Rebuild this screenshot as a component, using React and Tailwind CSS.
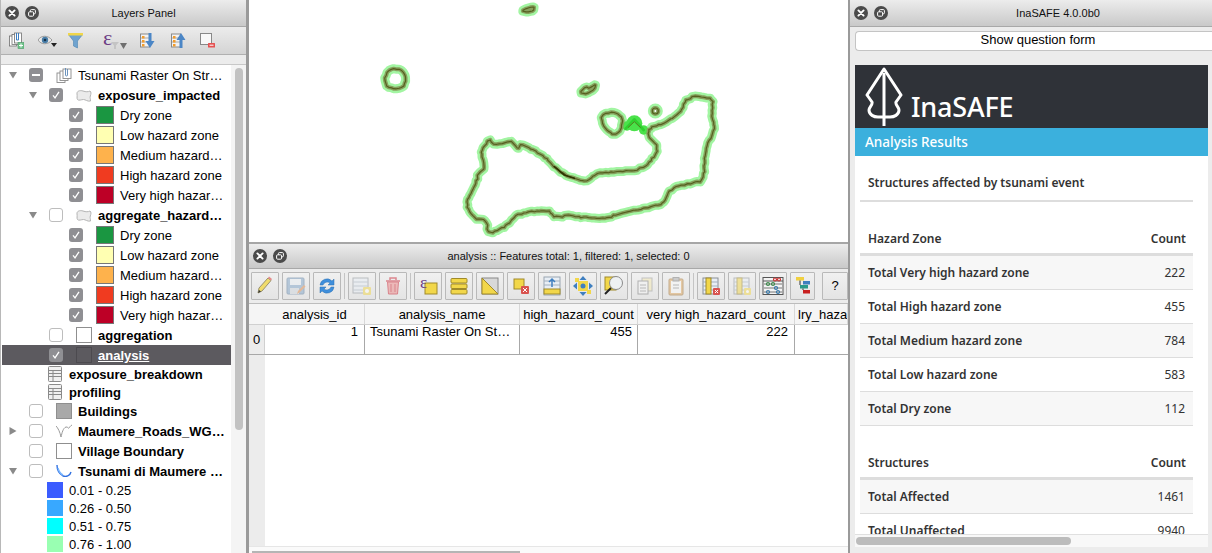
import React from "react";

const SANS = "font-['Liberation_Sans',Arial,sans-serif]";
const WEB = "font-['Noto_Sans','Open_Sans',sans-serif]";

function WinButtons() {
  return (
    <div className="flex items-center gap-[6px] pl-[4px] w-[40px] shrink-0">
      <svg width="14" height="14" viewBox="0 0 14 14">
        <circle cx="7" cy="7" r="7" fill="#4b4b4b" />
        <path d="M4.4 4.4l5.2 5.2M9.6 4.4l-5.2 5.2" stroke="#fff" strokeWidth="1.9" strokeLinecap="round" />
      </svg>
      <svg width="14" height="14" viewBox="0 0 14 14">
        <circle cx="7" cy="7" r="7" fill="#4b4b4b" />
        <rect x="5.4" y="3.6" width="5" height="4.2" rx="1" fill="none" stroke="#fff" strokeWidth="1" />
        <rect x="3.6" y="5.8" width="5" height="4.4" rx="1" fill="#4b4b4b" stroke="#fff" strokeWidth="1" />
      </svg>
    </div>
  );
}

function TitleBar({ title, h, extra = "" }) {
  return (
    <div className={`${h} flex items-center shrink-0 bg-gradient-to-b from-[#ececec] to-[#c9c9c9] border-b border-[#a8a8a8]`}>
      <WinButtons />
      <div className={`flex-1 text-center text-[11px] text-[#111] ${extra}`}>{title}</div>
    </div>
  );
}

function Check({ state }) {
  if (state === "on")
    return (
      <div className="w-[14px] h-[14px] rounded-[3px] bg-[#8f8f93] flex items-center justify-center shrink-0">
        <svg width="10" height="10" viewBox="0 0 10 10"><path d="M2 5.4l2 2.4 4-6" stroke="#fff" strokeWidth="1.3" fill="none" /></svg>
      </div>
    );
  if (state === "mixed")
    return (
      <div className="w-[14px] h-[14px] rounded-[3px] bg-[#8f8f93] flex items-center justify-center shrink-0">
        <div className="w-[8px] h-[2px] bg-white" />
      </div>
    );
  return <div className="w-[14px] h-[14px] rounded-[3px] bg-white border border-[#bdbdbd] shrink-0" />;
}

function Arrow({ dir }) {
  if (dir === "down")
    return <svg width="10" height="8" viewBox="0 0 10 8"><path d="M1 1h8L5 7.5z" fill="#8a8a8a" /></svg>;
  if (dir === "right")
    return <svg width="10" height="10" viewBox="0 0 10 10"><path d="M1.5 1v8L8.5 5z" fill="#8a8a8a" /></svg>;
  return null;
}

const GroupIcon = ({ size = 16 }) => (
  <svg width={size} height={size} viewBox="0 0 16 16" fill="none" stroke="#8a8a8a" strokeWidth="0.9">
    <rect x="1" y="6" width="8" height="9.500" fill="#fff" />
    <rect x="4" y="4" width="8" height="9.500" fill="#fff" />
    <rect x="7" y="2" width="8" height="9.500" fill="#fff" />
    <path d="M9.500 1v7a1 1 0 002 0V2" stroke="#5b87b5" />
  </svg>
);
const PolyIcon = () => (
  <svg width="16" height="13" viewBox="0 0 16 13">
    <path d="M1 5c-.5-3 3-4 6-3s5 1 7 0c1.500 1 1 3 .3 5s.5 3 .2 5c-3 .8-5-1.500-7-1.500S2.500 12 1.500 10.500 1.500 7 1 5z" fill="#ebebeb" stroke="#b4b4b4" />
  </svg>
);
const BoxIcon = ({ fill = "#fff", stroke = "#8f8f8f" }) => (
  <div className="w-[16px] h-[16px] border shrink-0" style={{ background: fill, borderColor: stroke }} />
);
const TableIcon = () => (
  <svg width="14" height="16" viewBox="0 0 14 16" fill="#f0f0f0" stroke="#8a8a8a" strokeWidth="1">
    <rect x="0.500" y="0.500" width="13" height="15" rx="1" />
    <path d="M0.500 4.500h13M0.500 7.500h13M0.500 10.500h13M5 4.500v11" fill="none" />
  </svg>
);
const LineIcon = () => (
  <svg width="16" height="16" viewBox="0 0 16 16"><path d="M0 3c2 2 4 6 5 11 1-4 2-9 5-10 2-.5 2 2 3 1s1-2 3-3" fill="none" stroke="#9a9a9a" /></svg>
);
const RasterIcon = () => (
  <svg width="16" height="14" viewBox="0 0 16 14"><path d="M1 1c0 5 1 8 6 11 3 1 7 0 8-4" fill="none" stroke="#2f6fe0" strokeWidth="1.400" /><path d="M2 4c1 4 3 6 5 7" fill="none" stroke="#79b6ff" strokeWidth="1.400" /></svg>
);

function Name({ children, bold, selected }) {
  return (
    <span className={`text-[13px] whitespace-nowrap ${bold ? "font-bold" : ""} ${selected ? "text-white underline" : "text-black"}`}>
      {children}
    </span>
  );
}

function Row({ pad, arrow, check, icon, text, bold, selected }) {
  return (
    <div className={`h-[20px] flex items-center ${pad} ${selected ? "bg-[#5c5a5f]" : ""}`}>
      <div className="w-[21px] shrink-0 flex items-center">{arrow ? <Arrow dir={arrow} /> : null}</div>
      <Check state={check} />
      <div className="ml-[13px] w-[16px] shrink-0 flex items-center justify-center">{icon}</div>
      <div className="ml-[6px]"><Name bold={bold} selected={selected}>{text}</Name></div>
    </div>
  );
}

function Legend({ color, text }) {
  return (
    <div className="h-[20px] flex items-center pl-[67px]">
      <Check state="on" />
      <div className="ml-[13px] w-[18px] h-[18px] border border-[#777] shrink-0" style={{ background: color }} />
      <div className="ml-[6px]"><Name>{text}</Name></div>
    </div>
  );
}

function ZoneGroup() {
  return (
    <>
      <Legend color="#1a9641" text="Dry zone" />
      <Legend color="#ffffb2" text="Low hazard zone" />
      <Legend color="#feb24c" text="Medium hazard…" />
      <Legend color="#f03b20" text="High hazard zone" />
      <Legend color="#bd0026" text="Very high hazar…" />
    </>
  );
}

function TableRow({ text }) {
  return (
    <div className="h-[18px] flex items-center pl-[46px]">
      <TableIcon />
      <div className="ml-[7px]"><Name bold>{text}</Name></div>
    </div>
  );
}

function Ramp({ color, text }) {
  return (
    <div className="h-[18px] flex items-center pl-[45px]">
      <div className="w-[16px] h-[16px] shrink-0" style={{ background: color }} />
      <div className="ml-[6px]"><Name>{text}</Name></div>
    </div>
  );
}

const SmallTable = ({ arrow }) => (
  <svg width="15" height="15" viewBox="0 0 15 15">
    <rect x="0.500" y="1" width="9" height="13" fill="#f2f2f2" stroke="#8a8a8a" />
    <path d="M1 5h8M1 9h8" stroke="#aaa" />
    <rect x="2" y="3" width="2.500" height="2.500" fill="#f39c2b" />
    <rect x="2" y="7" width="2.500" height="2.500" fill="#f39c2b" />
    <rect x="2" y="11" width="2.500" height="2.500" fill="#f39c2b" />
    {arrow === "down" ? (
      <path d="M8.500 0h3v8h3l-4.500 7-4.500-7h3z" fill="#4b86c6" />
    ) : (
      <path d="M8.500 15h3V7h3L10 0 5.500 7h3z" fill="#4b86c6" />
    )}
  </svg>
);

function LayerToolbar() {
  return (
    <div className="h-[28px] shrink-0 flex items-center bg-gradient-to-b from-[#ececec] to-[#d4d4d4] border-b border-[#b0b0b0] pl-[8px]">
      <svg width="15" height="17" viewBox="0 0 15 17" className="shrink-0">
        <g fill="#fff" stroke="#6f6f6f" strokeWidth="0.800">
          <rect x="0.500" y="4" width="7" height="10" />
          <rect x="3" y="2.500" width="7" height="10" />
          <rect x="5.500" y="1" width="7" height="10" />
        </g>
        <path d="M7.500 1v7h2V1" fill="none" stroke="#3b7cc0" />
        <rect x="9" y="10.500" width="6" height="6" fill="#6fc48a" stroke="#4b9a66" strokeWidth="0.600" />
        <path d="M12 11.500v4M10 13.500h4" stroke="#fff" />
      </svg>
      <svg width="20" height="12" viewBox="0 0 20 12" className="ml-[14px] shrink-0">
        <path d="M0 5c3-5 10-5 14 0-4 5-11 5-14 0z" fill="#e8e8e8" stroke="#888" strokeWidth="0.800" />
        <circle cx="7" cy="5" r="3.200" fill="#4a7ea8" />
        <circle cx="7" cy="5" r="1.300" fill="#16324a" />
        <path d="M13 8h6l-3 4z" fill="#222" />
      </svg>
      <svg width="15" height="16" viewBox="0 0 15 16" className="ml-[10px] shrink-0">
        <path d="M0 1h15l-5.500 7v7l-4-2V8z" fill="#6fa3cf" stroke="#4d84b2" strokeWidth="0.600" />
        <rect x="0" y="0" width="15" height="2.500" fill="#f0d64a" />
      </svg>
      <div className="ml-[20px] w-[24px] flex items-center shrink-0">
        <span className="text-[22px] leading-none text-[#6b3c84] font-['Liberation_Serif',serif] -mt-[6px]">ε</span>
        <svg width="8" height="7" viewBox="0 0 8 7" className="mt-[10px] -ml-[1px] shrink-0"><path d="M0 0h8L5 3.500V7H3V3.500z" fill="#c4c4c4" /></svg>
        <svg width="7" height="6" viewBox="0 0 7 6" className="ml-[1px] mt-[10px] shrink-0"><path d="M0 0h7L3.500 6z" fill="#6f6f6f" /></svg>
      </div>
      <div className="ml-[13px] shrink-0"><SmallTable arrow="down" /></div>
      <div className="ml-[16px] shrink-0"><SmallTable arrow="up" /></div>
      <svg width="15" height="15" viewBox="0 0 15 15" className="ml-[14px] shrink-0">
        <rect x="0.500" y="0.500" width="11" height="11" fill="#f8f8f8" stroke="#888" />
        <rect x="8" y="10" width="7" height="4.500" rx="0.500" fill="#e55050" />
        <path d="M9.500 12.200h4" stroke="#fff" />
      </svg>
    </div>
  );
}

function TBtn({ children, w = "w-[28px]", off }) {
  return (
    <div className={`${w} h-[28px] shrink-0 border border-[#b9b9b9] rounded-[1px] bg-gradient-to-b from-[#f0f0f0] to-[#e4e4e4] flex items-center justify-center ${off ? "[&>*]:opacity-50" : ""}`}>
      {children}
    </div>
  );
}
const Sep = () => <div className="w-px h-[26px] bg-[#c4c4c4] shrink-0" />;

const Tbl = ({ children }) => (
  <svg width="20" height="20" viewBox="0 0 20 20">
    <rect x="1" y="2" width="15" height="15" fill="#e8eef5" stroke="#8a8f96" />
    <path d="M1 6h15M1 10h15M1 14h15" stroke="#a4b0bd" />
    {children}
  </svg>
);

function AttrToolbar() {
  return (
    <div className="h-[35px] shrink-0 flex items-center gap-[3px] pl-[2px] bg-[#ececec] border-b border-[#bdbdbd]">
      <TBtn>
        <svg width="20" height="20" viewBox="0 0 20 20"><path d="M3 17l1-5L13 2l3 2.500-9 10.500z" fill="#f0dc6c" stroke="#9a9270" /><path d="M13 2l3 2.500 1-1.500-3-2.500z" fill="#e58a8a" /><path d="M3 17l1-3 2 1.500z" fill="#333" /></svg>
      </TBtn>
      <TBtn off>
        <svg width="20" height="20" viewBox="0 0 20 20"><rect x="1" y="2" width="17" height="16" rx="1" fill="#7fa4c8" stroke="#5f7f9f" /><rect x="4" y="3" width="11" height="6" fill="#e9eef3" /><rect x="4" y="12" width="9" height="6" fill="#cfd6dd" /><path d="M11 18l1-3 6-6 1.500 1.500-6 6z" fill="#e08a4a" /></svg>
      </TBtn>
      <TBtn>
        <svg width="20" height="20" viewBox="0 0 20 20" fill="none"><path d="M3 9a7 7 0 0 1 12-4l2-2v6h-6l2-2a4.500 4.500 0 0 0-7 2z" fill="#3f8fdc" stroke="#2f70b0" strokeWidth="0.500" /><path d="M17 11a7 7 0 0 1-12 4l-2 2v-6h6l-2 2a4.500 4.500 0 0 0 7-2z" fill="#3f8fdc" stroke="#2f70b0" strokeWidth="0.500" /></svg>
      </TBtn>
      <Sep />
      <TBtn off><Tbl><rect x="11" y="11" width="8" height="8" rx="1" fill="#f0d64a" /><circle cx="15" cy="15" r="2" fill="#fff" /></Tbl></TBtn>
      <TBtn off>
        <svg width="20" height="20" viewBox="0 0 20 20"><path d="M3 5h14M7 4V2h6v2" stroke="#c23" strokeWidth="1.500" fill="none" /><path d="M4.500 6h11l-1 12h-9z" fill="#e88" stroke="#c23" /><path d="M8 8v8M12 8v8" stroke="#c23" /></svg>
      </TBtn>
      <Sep />
      <TBtn>
        <svg width="20" height="20" viewBox="0 0 20 20"><rect x="7" y="7" width="12" height="11" fill="#f2d74a" stroke="#a08a2a" /><text x="2" y="12" fontSize="17" fontFamily="Liberation Serif" fill="#6b3c84">ε</text></svg>
      </TBtn>
      <TBtn>
        <svg width="20" height="20" viewBox="0 0 20 20" fill="#f2d74a" stroke="#a08a2a"><rect x="2" y="2.500" width="16" height="4.500" rx="1" /><rect x="2" y="8" width="16" height="4.500" rx="1" /><rect x="2" y="13.500" width="16" height="4.500" rx="1" /></svg>
      </TBtn>
      <TBtn>
        <svg width="20" height="20" viewBox="0 0 20 20"><rect x="2" y="2" width="16" height="16" fill="#d8d8d8" stroke="#888" /><path d="M2 2l16 16H2z" fill="#f2d74a" stroke="#a08a2a" /></svg>
      </TBtn>
      <TBtn>
        <svg width="20" height="20" viewBox="0 0 20 20"><rect x="3" y="3" width="10" height="10" fill="#f2d74a" stroke="#a08a2a" /><rect x="10" y="10" width="8" height="8" rx="1" fill="#d9534f" /><path d="M12 12l4 4M16 12l-4 4" stroke="#fff" /></svg>
      </TBtn>
      <TBtn>
        <svg width="20" height="20" viewBox="0 0 20 20"><rect x="2" y="1" width="16" height="18" fill="#e8eef5" stroke="#9aa6b2" /><path d="M2 5h16M2 9h16" stroke="#a4b0bd" /><rect x="2" y="13" width="16" height="5" fill="#f2d74a" stroke="#a08a2a" /><path d="M10 11V3M7 6l3-3 3 3" stroke="#3f7fc0" strokeWidth="1.500" fill="none" /></svg>
      </TBtn>
      <TBtn>
        <svg width="22" height="22" viewBox="0 0 22 22"><rect x="6" y="6" width="10" height="10" fill="#f2d74a" /><g fill="#3f7fc0"><path d="M11 1l3.500 4h-7z" /><path d="M11 21l3.500-4h-7z" /><path d="M1 11l4-3.500v7z" /><path d="M21 11l-4-3.500v7z" /></g><circle cx="11" cy="11" r="2.500" fill="#3f7fc0" /><rect x="3" y="3" width="4" height="4" fill="#f2d74a" /><rect x="15" y="15" width="4" height="4" fill="#f2d74a" /></svg>
      </TBtn>
      <TBtn>
        <svg width="22" height="22" viewBox="0 0 22 22"><rect x="2" y="2" width="11" height="13" fill="#f2d74a" stroke="#a08a2a" /><circle cx="13" cy="8" r="6.500" fill="#eef1f3" stroke="#8a8a8a" /><path d="M8 13l-6 6" stroke="#222" strokeWidth="2" /></svg>
      </TBtn>
      <TBtn off>
        <svg width="20" height="20" viewBox="0 0 20 20"><rect x="7" y="2" width="10" height="13" fill="#f4e9b0" stroke="#999" /><rect x="3" y="5" width="10" height="13" fill="#f5f5f5" stroke="#777" /><path d="M5 9h6M5 12h6M5 15h6" stroke="#888" /></svg>
      </TBtn>
      <TBtn off>
        <svg width="20" height="20" viewBox="0 0 20 20"><rect x="3" y="3" width="14" height="16" rx="1" fill="#e0a860" stroke="#a07030" /><rect x="5" y="5" width="10" height="12" fill="#fbfbfb" /><rect x="7" y="1.500" width="6" height="3.500" fill="#aaa" stroke="#777" /><path d="M7 9h6M7 12h6" stroke="#888" /></svg>
      </TBtn>
      <Sep />
      <TBtn>
        <svg width="20" height="20" viewBox="0 0 20 20"><rect x="2" y="2" width="15" height="16" fill="#e8eef5" stroke="#8a8f96" /><path d="M2 6h15M2 10h15M2 14h15" stroke="#a4b0bd" /><rect x="5" y="2" width="5" height="16" fill="#f2d74a" stroke="#a08a2a" /><rect x="12" y="12" width="7" height="7" rx="1" fill="#d9534f" /><path d="M14 14l3 3M17 14l-3 3" stroke="#fff" /></svg>
      </TBtn>
      <TBtn off>
        <svg width="20" height="20" viewBox="0 0 20 20"><rect x="2" y="2" width="15" height="16" fill="#e8eef5" stroke="#8a8f96" /><path d="M2 6h15M2 10h15M2 14h15" stroke="#a4b0bd" /><rect x="5" y="2" width="5" height="16" fill="#f2d74a" stroke="#a08a2a" /><rect x="12" y="12" width="7" height="7" rx="1" fill="#f2d74a" /><circle cx="15.500" cy="15.500" r="1.500" fill="#fff" /></svg>
      </TBtn>
      <TBtn>
        <svg width="22" height="20" viewBox="0 0 22 20"><rect x="1" y="1.500" width="20" height="17" fill="#f4f4f4" stroke="#555" /><path d="M1 5h20" stroke="#555" /><path d="M2 8h18M2 12h18M2 16h18" stroke="#777" /><g fill="none" strokeWidth="1.200"><circle cx="13" cy="3.500" r="1.500" stroke="#c33" /><circle cx="17" cy="3.500" r="1.500" stroke="#c33" /><circle cx="6" cy="8" r="1.500" stroke="#3a8a4a" /><circle cx="11" cy="8" r="1.500" stroke="#3a8a4a" /><circle cx="14" cy="12" r="1.500" stroke="#37a" /><circle cx="6" cy="16" r="1.500" stroke="#37a" /><circle cx="16" cy="16" r="1.500" stroke="#37a" /></g></svg>
      </TBtn>
      <TBtn w="w-[25px]">
        <svg width="18" height="20" viewBox="0 0 18 20"><rect x="2" y="1" width="8" height="3.500" fill="#f0d040" /><rect x="9" y="5" width="7" height="3.500" fill="#3f7fc0" /><rect x="6" y="9" width="8" height="3.500" fill="#2a9a8a" /><rect x="9" y="14" width="7" height="3.500" fill="#c82020" /><path d="M6 4.500V9M9 12.500V14" stroke="#333" /></svg>
      </TBtn>
      <div className="w-px" />
      <TBtn w="w-[26px]"><span className="text-[13px] text-black">?</span></TBtn>
    </div>
  );
}

function Th({ w, children, clip }) {
  return (
    <div className={`${w} shrink-0 h-full pt-px flex items-center ${clip ? "justify-start" : "justify-center"} overflow-hidden border-r border-[#d8d8d8] text-[13px] text-black whitespace-nowrap`}>
      {children}
    </div>
  );
}

function AttrTable() {
  return (
    <div className="flex-1 min-h-0 flex flex-col bg-white text-[13px] text-black">
      <div className="h-[21px] shrink-0 flex bg-[#f5f5f5] border-b border-[#d0d0d0]">
        <div className="w-[16px] shrink-0" />
        <Th w="w-[100px]">analysis_id</Th>
        <Th w="w-[155px]">analysis_name</Th>
        <Th w="w-[118px]">high_hazard_count</Th>
        <Th w="w-[157px]">very high_hazard_count</Th>
        <Th w="flex-1" clip><span className="pl-[3px]">lry_haza</span></Th>
      </div>
      <div className="h-[30px] shrink-0 flex border-b border-[#a8a8a8]">
        <div className="w-[16px] shrink-0 bg-[#ececec] flex items-center justify-center border-r border-[#d0d0d0]">0</div>
        <div className="w-[100px] shrink-0 border-r border-[#a8a8a8] text-right pr-[6px] leading-[14px]">1</div>
        <div className="w-[155px] shrink-0 border-r border-[#a8a8a8] pl-[5px] leading-[14px] whitespace-nowrap">Tsunami Raster On St…</div>
        <div className="w-[118px] shrink-0 border-r border-[#a8a8a8] text-right pr-[5px] leading-[14px]">455</div>
        <div className="w-[157px] shrink-0 border-r border-[#a8a8a8] text-right pr-[6px] leading-[14px]">222</div>
      </div>
      <div className="flex-1 flex border-b border-[#e6e6e6]">
        <div className="w-[16px] bg-[#ececec]" />
      </div>
      <div className="h-[6px] shrink-0 bg-[#fafafa] flex items-end pl-[3px]">
        <div className="w-[268px] h-[2px] bg-[#b5b5b5]" />
      </div>
    </div>
  );
}

function smooth(points) {
  const out = [];
  for (let i = 0; i < points.length - 1; i++) {
    const [x1, y1] = points[i];
    const [x2, y2] = points[i + 1];
    out.push([x1 * 0.8 + x2 * 0.2, y1 * 0.8 + y2 * 0.2]);
    out.push([x1 * 0.2 + x2 * 0.8, y1 * 0.2 + y2 * 0.8]);
  }
  out.push(out[0]);
  return out;
}

function rough(raw, amp, seed) {
  const points = smooth(raw);
  let s = seed;
  const rnd = () => {
    s = (s * 9301 + 49297) % 233280;
    return s / 233280 - 0.5;
  };
  const out = [];
  for (let i = 0; i < points.length - 1; i++) {
    const [x1, y1] = points[i];
    const [x2, y2] = points[i + 1];
    const len = Math.hypot(x2 - x1, y2 - y1);
    const n = Math.max(1, Math.round(len / 8));
    for (let j = 0; j < n; j++) {
      const t = j / n;
      out.push([x1 + (x2 - x1) * t + rnd() * amp, y1 + (y2 - y1) * t + rnd() * amp]);
    }
  }
  out.push(out[0]);
  return "M" + out.map((p) => p[0].toFixed(1) + " " + p[1].toFixed(1)).join("L");
}

const MAIN = [[285,462],[300,430],[315,400],[322,370],[342,355],[335,325],[332,300],[355,268],[370,285],[400,278],[425,275],[440,297],[450,283],[480,295],[515,315],[550,350],[580,375],[640,397],[680,370],[730,365],[815,358],[858,310],[858,285],[830,255],[835,235],[880,220],[905,205],[930,185],[940,155],[970,137],[1027,146],[1022,190],[1032,240],[1005,290],[997,392],[950,402],[900,415],[880,460],[820,475],[730,495],[710,505],[630,502],[600,495],[555,503],[530,480],[440,490],[410,525],[353,553],[345,510],[310,507],[285,462]];
const LOOP = [[688,195],[730,185],[757,205],[750,240],[730,257],[700,235],[688,195]];
const RING = [[40,88],[50,62],[72,56],[96,62],[106,88],[96,112],[72,117],[50,112],[40,88]];
const ISLE = [[626,128],[645,110],[655,115],[675,102],[670,118],[648,132],[626,128]];
const TOP = [[452,-118],[470,-126],[490,-130],[488,-118],[468,-113],[452,-118]];

function MapView() {
  const paths = [rough(MAIN, 4, 7), rough(LOOP, 2.5, 11), rough(RING, 2.5, 23), rough(ISLE, 1, 31), rough(TOP, 1, 41)];
  const circ = <circle cx="853" cy="183" r="9" />;
  return (
    <div className="h-[242px] shrink-0 bg-white overflow-hidden">
      <svg width="599" height="242" viewBox="-366 -150 1797 726" className="block">
        <g fill="none" strokeLinejoin="round" strokeLinecap="round">
          <g stroke="#a2f5a2" strokeWidth="27">{paths.map((d, i) => <path key={i} d={d} />)}{circ}</g>
          <g fill="#4ae24a" stroke="none">
            <circle cx="790" cy="220" r="24" />
            <circle cx="768" cy="228" r="14" />
            <circle cx="818" cy="240" r="14" />
          </g>
          <g stroke="#86a05e" strokeWidth="12">{paths.map((d, i) => <path key={i} d={d} />)}{circ}</g>
          <g stroke="#55601f" strokeWidth="3.500">{paths.map((d, i) => <path key={i} d={d} />)}{circ}</g>
          <path d="M764 236 L790 208 L818 240" stroke="#2fd02f" strokeWidth="8" />
          <path d="M772 232 L790 215 L808 232" stroke="#55801f" strokeWidth="3" />
          <path d="M550 350 L580 375 L610 385" stroke="#2c3300" strokeWidth="5" />
        </g>
      </svg>
    </div>
  );
}

function WebHead({ a, b }) {
  return (
    <div className="h-[35px] pt-[3px] flex items-center justify-between pl-[8px] pr-[7px] border-b-[3px] border-[#dddddd] font-semibold text-[12px] text-[#333]">
      <span>{a}</span>
      <span>{b}</span>
    </div>
  );
}
function WebRow({ a, b, shade }) {
  return (
    <div className={`h-[34px] flex items-center justify-between pl-[8px] pr-[8px] border-b border-[#dddddd] text-[12px] text-[#333] ${shade ? "bg-[#f7f7f7]" : "bg-white"}`}>
      <span className="font-semibold">{a}</span>
      <span>{b}</span>
    </div>
  );
}

function InaSafePanel() {
  return (
    <div className="flex-1 min-w-0 flex flex-col bg-[#ececec] border-l-2 border-[#9a9a9a]">
      <TitleBar title="InaSAFE 4.0.0b0" h="h-[27px]" extra="pl-[14px]" />
      <div className="h-[20px] mt-[4px] ml-[5px] shrink-0 bg-white border border-[#c4c4c4] border-r-0 rounded-l-[4px] flex items-center justify-center text-[13px] text-black pb-[2px]">
        <span className="pl-[8px]">Show question form</span>
      </div>
      <div className={`mt-[14px] ml-[5px] mr-[4px] h-[469px] shrink-0 bg-white overflow-hidden ${WEB}`}>
        <div className="h-[63px] bg-[#2f3238] flex items-end pl-[10px]">
          <svg width="38" height="60" viewBox="0 0 38 60" fill="none" stroke="#fff" strokeWidth="3" className="shrink-0 mb-px">
            <path d="M19 2L36 28 31 35c-1 3 3 5 3 8 0 5-5 7-9 7H13c-4 0-9-2-9-7 0-3 4-5 3-8L2 28z" strokeLinejoin="round" />
            <path d="M19 6V59" />
          </svg>
          <span className="ml-[8px] mb-[3px] text-[27px] leading-[36px] text-white font-medium tracking-[-0.2px]">InaSAFE</span>
        </div>
        <div className="h-[28px] bg-[#3bb0dd] flex items-center pl-[10px] text-[13.500px] text-white font-medium">Analysis Results</div>
        <div className="pl-[5px] pr-[15px]">
          <div className="h-[46px] pt-[17px] pl-[8px] text-[12px] font-semibold text-[#333] leading-[20px] border-b-[2px] border-[#dddddd]">Structures affected by tsunami event</div>
          <div className="h-[19px]" />
          <WebHead a="Hazard Zone" b="Count" />
          <WebRow shade a="Total Very high hazard zone" b="222" />
          <WebRow a="Total High hazard zone" b="455" />
          <WebRow shade a="Total Medium hazard zone" b="784" />
          <WebRow a="Total Low hazard zone" b="583" />
          <WebRow shade a="Total Dry zone" b="112" />
          <div className="h-[19px]" />
          <WebHead a="Structures" b="Count" />
          <WebRow shade a="Total Affected" b="1461" />
          <WebRow a="Total Unaffected" b="9940" />
        </div>
      </div>
      <div className="ml-[5px] mr-[4px] h-[13px] shrink-0 bg-[#f8f8f8] border-t border-[#e0e0e0] flex items-center pl-[1px]">
        <div className="w-[215px] h-[8px] rounded-full bg-[#bcbcbc]" />
      </div>
    </div>
  );
}

export default function App() {
  return (
    <div className={`w-[1212px] h-[553px] overflow-hidden flex bg-[#ececec] ${SANS}`}>
      <div className="w-[246px] shrink-0 flex flex-col bg-[#ececec] border-l border-[#b8b8b8]">
        <TitleBar title="Layers Panel" h="h-[27px]" />
        <LayerToolbar />
        <div className="h-[10px] shrink-0 bg-[#ececec] border-b border-[#c8c8c8]" />
        <div className="flex-1 min-h-0 flex">
          <div className="w-[230px] shrink-0 bg-white overflow-hidden pl-px">
            <Row pad="pl-[6px]" arrow="down" check="mixed" icon={<GroupIcon />} text="Tsunami Raster On Str…" />
            <Row pad="pl-[26px]" arrow="down" check="on" icon={<PolyIcon />} text="exposure_impacted" bold />
            <ZoneGroup />
            <Row pad="pl-[26px]" arrow="down" check="off" icon={<PolyIcon />} text="aggregate_hazard…" bold />
            <ZoneGroup />
            <Row pad="pl-[26px]" check="off" icon={<BoxIcon />} text="aggregation" bold />
            <Row pad="pl-[26px]" check="on" icon={<BoxIcon fill="#5c5a5f" stroke="#4c4a4f" />} text="analysis" bold selected />
            <TableRow text="exposure_breakdown" />
            <TableRow text="profiling" />
            <Row pad="pl-[6px]" check="off" icon={<BoxIcon fill="#a9a9a9" />} text="Buildings" bold />
            <Row pad="pl-[6px]" arrow="right" check="off" icon={<LineIcon />} text="Maumere_Roads_WG…" bold />
            <Row pad="pl-[6px]" check="off" icon={<BoxIcon />} text="Village Boundary" bold />
            <Row pad="pl-[6px]" arrow="down" check="off" icon={<RasterIcon />} text="Tsunami di Maumere …" bold />
            <Ramp color="#3b5cff" text="0.01 - 0.25" />
            <Ramp color="#38a8ff" text="0.26 - 0.50" />
            <Ramp color="#00ffff" text="0.51 - 0.75" />
            <Ramp color="#99ffb2" text="0.76 - 1.00" />
          </div>
          <div className="flex-1 bg-[#f4f4f4] pt-[3px] pl-[4px]">
            <div className="w-[8px] h-[362px] rounded-full bg-[#c2c2c2]" />
          </div>
        </div>
      </div>
      <div className="w-[3px] shrink-0 bg-[#9a9a9a]" />
      <div className="w-[599px] shrink-0 flex flex-col bg-[#ececec]">
        <MapView />
        <div className="h-[2px] shrink-0 bg-[#a6a6a6]" />
        <TitleBar title="analysis :: Features total: 1, filtered: 1, selected: 0" h="h-[25px]" />
        <AttrToolbar />
        <AttrTable />
      </div>
      <InaSafePanel />
    </div>
  );
}
